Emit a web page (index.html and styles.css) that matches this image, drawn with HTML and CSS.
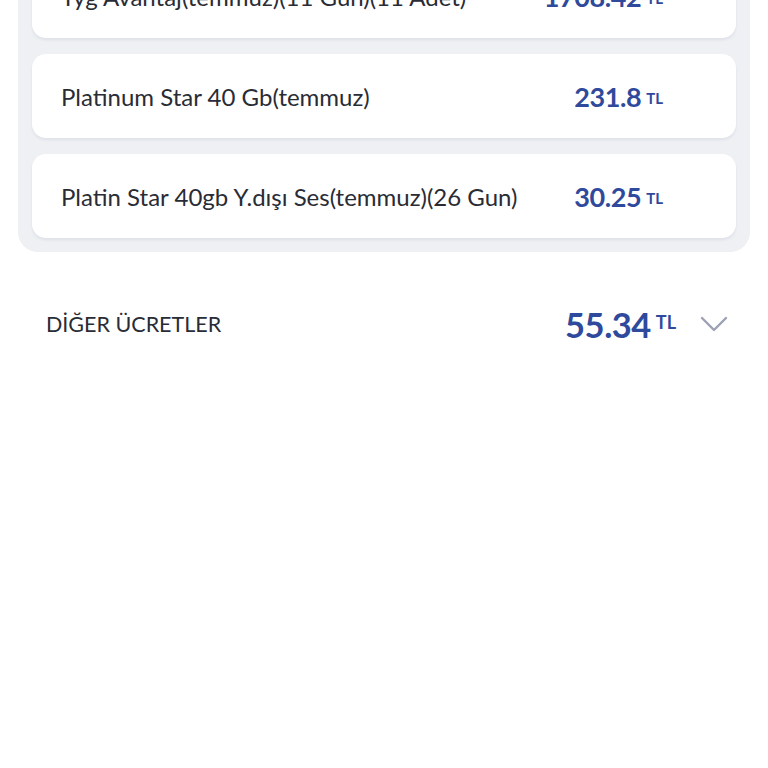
FILE: index.html
```html
<!DOCTYPE html>
<html lang="tr">
<head>
<meta charset="utf-8">
<title>Fatura Detayı</title>
<link rel="stylesheet" href="styles.css">
</head>
<body>
<div class="page">
  <section class="group">
    <div class="item">
      <span class="label">Tyg Avantaj(temmuz)(11 Gun)(11 Adet)</span>
      <span class="amount"><span class="num">1708.42</span><span class="cur">TL</span></span>
    </div>
    <div class="item">
      <span class="label">Platinum Star 40 Gb(temmuz)</span>
      <span class="amount"><span class="num">231.8</span><span class="cur">TL</span></span>
    </div>
    <div class="item">
      <span class="label">Platin Star 40gb Y.dışı Ses(temmuz)(26 Gun)</span>
      <span class="amount"><span class="num">30.25</span><span class="cur">TL</span></span>
    </div>
  </section>
  <div class="other">
    <span class="other-label">DİĞER ÜCRETLER</span>
    <span class="other-amount"><span class="num">55.34</span><span class="cur">TL</span></span>
    <svg class="chev" width="28" height="16" viewBox="0 0 28 16" aria-hidden="true">
      <path d="M2 2 L14 14 L26 2" fill="none" stroke="#9ca1b3" stroke-width="2.4" stroke-linecap="round" stroke-linejoin="round"/>
    </svg>
  </div>
</div>
</body>
</html>
```

FILE: styles.css
```css
html, body {
  margin: 0;
  padding: 0;
  background: #ffffff;
}
body {
  font-family: "Lato", "Noto Sans", sans-serif;
  color: #2b2d36;
}
.page {
  width: 768px;
  margin-top: -60px;
}
.group {
  margin: 0 18px;
  background: #eef0f4;
  border-radius: 20px;
  padding: 14px;
  display: flex;
  flex-direction: column;
  gap: 16px;
}
.item {
  background: #ffffff;
  border-radius: 14px;
  height: 84px;
  box-shadow: 0 2px 3px rgba(40, 50, 80, 0.08);
  display: flex;
  align-items: center;
  justify-content: space-between;
  padding: 0 73px 0 29px;
}
.label {
  font-size: 24px;
  color: #2a2c35;
}
.amount {
  display: flex;
  align-items: flex-start;
  color: #2f4a9c;
}
.amount .num {
  font-size: 27px;
  font-weight: 700;
  letter-spacing: -0.4px;
}
.amount .cur {
  font-size: 15px;
  font-weight: 700;
  margin-left: 5px;
  margin-top: 9px;
}
.other {
  display: flex;
  align-items: center;
  height: 144px;
  padding: 0 40px 0 46px;
}
.other-label {
  font-size: 21.5px;
  color: #2a2c35;
  flex: 1;
}
.other-amount {
  display: flex;
  align-items: flex-start;
  color: #2f4a9c;
}
.other-amount .num {
  font-size: 34.5px;
  font-weight: 700;
  letter-spacing: -0.5px;
}
.other-amount .cur {
  font-size: 18px;
  font-weight: 700;
  margin-left: 5px;
  margin-top: 7px;
}
.chev {
  margin-left: 24px;
  display: block;
}
```
